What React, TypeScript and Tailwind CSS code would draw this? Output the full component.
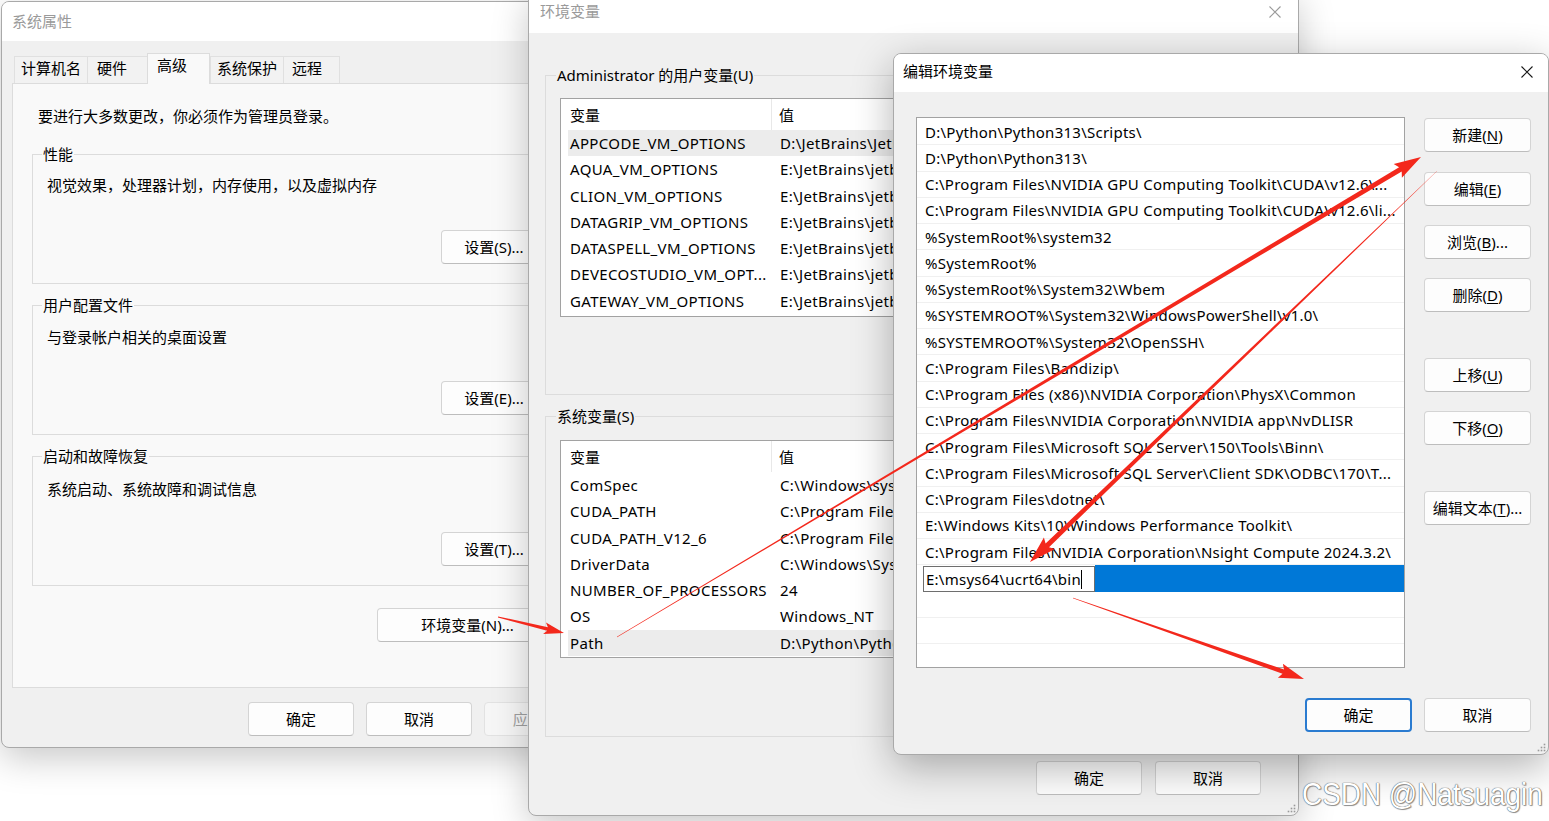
import React from "react";

function arrowPts(
  x1: number, y1: number, x2: number, y2: number,
  tail: number, shaft: number, hl: number, hw: number
): string {
  const dx = x2 - x1, dy = y2 - y1;
  const L = Math.hypot(dx, dy);
  const ux = dx / L, uy = dy / L;
  const nx = -uy, ny = ux;
  const bx = x2 - ux * hl, by = y2 - uy * hl;
  const nb = 3;
  const pts: [number, number][] = [
    [x1 + (nx * tail) / 2, y1 + (ny * tail) / 2],
    [bx + (nx * shaft) / 2, by + (ny * shaft) / 2],
    [bx - ux * nb + (nx * hw) / 2, by - uy * nb + (ny * hw) / 2],
    [x2, y2],
    [bx - ux * nb - (nx * hw) / 2, by - uy * nb - (ny * hw) / 2],
    [bx - (nx * shaft) / 2, by - (ny * shaft) / 2],
    [x1 - (nx * tail) / 2, y1 - (ny * tail) / 2],
  ];
  return pts.map((p) => `${p[0].toFixed(1)},${p[1].toFixed(1)}`).join(" ");
}

function CloseX({ color }: { color: string }) {
  return (
    <svg width="14" height="14" viewBox="0 0 14 14">
      <path d="M1.5 1.5L12.5 12.5M12.5 1.5L1.5 12.5" stroke={color} strokeWidth="1.1" fill="none" />
    </svg>
  );
}

function Grip() {
  return (
    <svg width="10" height="10" viewBox="0 0 10 10">
      {[
        [8.5, 2.5], [8.5, 5.5], [5.5, 5.5], [8.5, 8.5], [5.5, 8.5], [2.5, 8.5],
      ].map((p, i) => (
        <rect key={i} x={p[0] - 0.8} y={p[1] - 0.8} width="1.6" height="1.6" fill="#9a9a9a" />
      ))}
    </svg>
  );
}

function Btn({
  children,
  className = "",
  kind = "normal",
}: {
  children: React.ReactNode;
  className?: string;
  kind?: "normal" | "focus" | "disabled";
}) {
  const base =
    "h-[34px] rounded-[4px] flex items-center justify-center text-[15px] leading-[20px] shrink-0 whitespace-nowrap pb-[1px]";
  const k =
    kind === "focus"
      ? "bg-[#fdfdfd] border-2 border-[#2a7bd0]"
      : kind === "disabled"
      ? "bg-[#f6f6f6] border border-[#e2e2e2] text-[#a0a0a0]"
      : "bg-[#fdfdfd] border border-[#d4d4d4] border-b-[#bdbdbd]";
  return <div className={`${base} ${k} ${className}`}>{children}</div>;
}

function U({ c }: { c: string }) {
  return <span className="underline underline-offset-[2px]">{c}</span>;
}

const userVars: [string, string][] = [
  ["APPCODE_VM_OPTIONS", "D:\\JetBrains\\JetBrains\\vmoptions\\appcode.vmoptions"],
  ["AQUA_VM_OPTIONS", "E:\\JetBrains\\jetbra\\vmoptions\\aqua.vmoptions"],
  ["CLION_VM_OPTIONS", "E:\\JetBrains\\jetbra\\vmoptions\\clion.vmoptions"],
  ["DATAGRIP_VM_OPTIONS", "E:\\JetBrains\\jetbra\\vmoptions\\datagrip.vmoptions"],
  ["DATASPELL_VM_OPTIONS", "E:\\JetBrains\\jetbra\\vmoptions\\dataspell.vmoptions"],
  ["DEVECOSTUDIO_VM_OPT...", "E:\\JetBrains\\jetbra\\vmoptions\\devecostudio.vmoptions"],
  ["GATEWAY_VM_OPTIONS", "E:\\JetBrains\\jetbra\\vmoptions\\gateway.vmoptions"],
];

const sysVars: [string, string][] = [
  ["ComSpec", "C:\\Windows\\system32\\cmd.exe"],
  ["CUDA_PATH", "C:\\Program Files\\NVIDIA GPU Computing Toolkit\\CUDA\\v12.6"],
  ["CUDA_PATH_V12_6", "C:\\Program Files\\NVIDIA GPU Computing Toolkit\\CUDA\\v12.6"],
  ["DriverData", "C:\\Windows\\System32\\Drivers\\DriverData"],
  ["NUMBER_OF_PROCESSORS", "24"],
  ["OS", "Windows_NT"],
  ["Path", "D:\\Python\\Python313\\Scripts\\;D:\\Python\\Python313\\"],
];

const paths = [
  "D:\\Python\\Python313\\Scripts\\",
  "D:\\Python\\Python313\\",
  "C:\\Program Files\\NVIDIA GPU Computing Toolkit\\CUDA\\v12.6\\...",
  "C:\\Program Files\\NVIDIA GPU Computing Toolkit\\CUDA\\v12.6\\li...",
  "%SystemRoot%\\system32",
  "%SystemRoot%",
  "%SystemRoot%\\System32\\Wbem",
  "%SYSTEMROOT%\\System32\\WindowsPowerShell\\v1.0\\",
  "%SYSTEMROOT%\\System32\\OpenSSH\\",
  "C:\\Program Files\\Bandizip\\",
  "C:\\Program Files (x86)\\NVIDIA Corporation\\PhysX\\Common",
  "C:\\Program Files\\NVIDIA Corporation\\NVIDIA app\\NvDLISR",
  "C:\\Program Files\\Microsoft SQL Server\\150\\Tools\\Binn\\",
  "C:\\Program Files\\Microsoft SQL Server\\Client SDK\\ODBC\\170\\T...",
  "C:\\Program Files\\dotnet\\",
  "E:\\Windows Kits\\10\\Windows Performance Toolkit\\",
  "C:\\Program Files\\NVIDIA Corporation\\Nsight Compute 2024.3.2\\",
];

function GroupLegend({ children }: { children: React.ReactNode }) {
  return (
    <div className="-mt-[11px] ml-[9px] px-[1px] bg-[#f9f9f9] w-fit leading-[20px] text-[15px]">{children}</div>
  );
}

function SystemProps() {
  const tabs: { t: string; w: string; pl: string; sel?: boolean }[] = [
    { t: "计算机名", w: "w-[73px]", pl: "pl-[6px]" },
    { t: "硬件", w: "w-[60px]", pl: "pl-[9px]" },
    { t: "高级", w: "w-[63px]", pl: "pl-[9px]", sel: true },
    { t: "系统保护", w: "w-[73px]", pl: "pl-[6px]" },
    { t: "远程", w: "w-[57px]", pl: "pl-[8px]" },
  ];
  return (
    <div className="absolute left-[1px] top-[1px] w-[600px] h-[747px] rounded-[8px] border border-[#a9a9a9] bg-[#f0f0f0] shadow-[0_10px_36px_rgba(0,0,0,0.22)] flex flex-col overflow-hidden">
      <div className="h-[39px] shrink-0 bg-white flex items-center pl-[10px] pb-[1px] text-[15px] text-[#9a9a9a]">系统属性</div>
      <div className="flex-1 flex flex-col px-[10px] pt-[12px]">
        <div className="h-[30px] flex items-end pl-[2px] relative z-10">
          {tabs.map((tab) =>
            tab.sel ? (
              <div
                key={tab.t}
                className={`${tab.w} ${tab.pl} h-[31px] -mb-[1px] bg-[#f9f9f9] border-t border-l border-r border-[#dcdcdc] flex pt-[1px] leading-[20px] text-[15px]`}
              >
                {tab.t}
              </div>
            ) : (
              <div
                key={tab.t}
                className={`${tab.w} ${tab.pl} h-[27px] bg-[#f2f2f2] border-t border-l border-[#e0e0e0] last:border-r flex pt-[1px] leading-[20px] text-[15px]`}
              >
                {tab.t}
              </div>
            )
          )}
        </div>
        <div className="h-[605px] shrink-0 bg-[#f9f9f9] border border-[#dcdcdc] flex flex-col pt-[22px] text-[15px] leading-[20px]">
          <div className="pl-[25px]">要进行大多数更改，你必须作为管理员登录。</div>

          <div className="mt-[28px] ml-[19px] w-[537px] h-[130px] border border-[#dcdcdc] flex flex-col shrink-0">
            <GroupLegend>性能</GroupLegend>
            <div className="mt-[11px] pl-[14px]">视觉效果，处理器计划，内存使用，以及虚拟内存</div>
            <Btn className="w-[106px] mt-[35px] self-end mr-[21px]">设置(S)...</Btn>
          </div>

          <div className="mt-[21px] ml-[19px] w-[537px] h-[130px] border border-[#dcdcdc] flex flex-col shrink-0">
            <GroupLegend>用户配置文件</GroupLegend>
            <div className="mt-[12px] pl-[14px]">与登录帐户相关的桌面设置</div>
            <Btn className="w-[106px] mt-[34px] self-end mr-[21px]">设置(E)...</Btn>
          </div>

          <div className="mt-[21px] ml-[19px] w-[537px] h-[130px] border border-[#dcdcdc] flex flex-col shrink-0">
            <GroupLegend>启动和故障恢复</GroupLegend>
            <div className="mt-[13px] pl-[14px]">系统启动、系统故障和调试信息</div>
            <Btn className="w-[106px] mt-[33px] self-end mr-[21px]">设置(T)...</Btn>
          </div>

          <Btn className="w-[181px] mt-[22px] ml-[364px]">环境变量(N)...</Btn>
        </div>
        <div className="mt-[14px] flex justify-end gap-[12px]">
          <Btn className="w-[106px]">确定</Btn>
          <Btn className="w-[106px]">取消</Btn>
          <Btn className="w-[106px]" kind="disabled">应用(A)</Btn>
        </div>
      </div>
    </div>
  );
}

function VarList({ rows, hl, h }: { rows: [string, string][]; hl: number; h: string }) {
  return (
    <div className={`ml-[14px] w-[707px] ${h} shrink-0 border border-[#a2a2a2] bg-white flex flex-col overflow-hidden`}>
      <div className="h-[31px] shrink-0 flex items-center text-[15px]">
        <div className="w-[211px] h-full flex items-center pl-[9px] border-r border-[#e8e8e8]">变量</div>
        <div className="pl-[7px]">值</div>
      </div>
      {rows.map((r, i) => (
        <div
          key={r[0]}
          className={`h-[26.25px] shrink-0 ml-[7px] flex items-center text-[15px] tracking-[0.35px] whitespace-nowrap ${
            i === hl ? "bg-[#ececec]" : ""
          }`}
        >
          <div className="w-[204px] pl-[2px] overflow-hidden">{r[0]}</div>
          <div className="pl-[8px] overflow-hidden">{r[1]}</div>
        </div>
      ))}
    </div>
  );
}

function EnvVars() {
  return (
    <div className="absolute left-[528px] top-[-9px] w-[771px] h-[825px] rounded-[8px] border border-[#a9a9a9] bg-[#f0f0f0] shadow-[0_10px_36px_rgba(0,0,0,0.22)] flex flex-col overflow-hidden">
      <div className="h-[41px] shrink-0 bg-white flex items-center justify-between pl-[11px] pr-[16px] pb-[2px] text-[15px] text-[#9a9a9a]">
        <span>环境变量</span>
        <CloseX color="#9a9a9a" />
      </div>
      <div className="flex-1 flex flex-col pl-[16px] text-[15px] leading-[20px] relative">
        <div className="mt-[42px] w-[738px] h-[320px] shrink-0 border border-[#dcdcdc] flex flex-col">
          <div className="-mt-[11px] ml-[10px] px-[1px] bg-[#f0f0f0] w-fit">Administrator 的用户变量(U)</div>
          <div className="mt-[13px]">
            <VarList rows={userVars} hl={0} h="h-[219px]" />
          </div>
        </div>
        <div className="mt-[21px] w-[738px] h-[321px] shrink-0 border border-[#dcdcdc] flex flex-col">
          <div className="-mt-[11px] ml-[10px] px-[1px] bg-[#f0f0f0] w-fit">系统变量(S)</div>
          <div className="mt-[14px]">
            <VarList rows={sysVars} hl={6} h="h-[218px]" />
          </div>
        </div>
        <div className="mt-[24px] flex justify-end gap-[13px] pr-[37px]">
          <Btn className="w-[106px]">确定</Btn>
          <Btn className="w-[106px]">取消</Btn>
        </div>
        <div className="absolute right-[2px] bottom-[2px]">
          <Grip />
        </div>
      </div>
    </div>
  );
}

function EditEnv() {
  return (
    <div className="absolute left-[893px] top-[53px] w-[656px] h-[702px] rounded-[8px] border border-[#a9a9a9] bg-[#f0f0f0] shadow-[0_12px_40px_rgba(0,0,0,0.3)] flex flex-col overflow-hidden">
      <div className="h-[38px] shrink-0 bg-white flex items-center justify-between pl-[9px] pr-[14px] pb-[3px] text-[15px] text-black">
        <span>编辑环境变量</span>
        <CloseX color="#1a1a1a" />
      </div>
      <div className="flex-1 flex flex-col pl-[22px] pr-[17px] pt-[25px] text-[15px] leading-[20px] relative">
        <div className="flex">
          <div className="w-[489px] h-[551px] shrink-0 border border-[#a2a2a2] bg-white pt-[1px] flex flex-col overflow-hidden">
            {paths.map((p) => (
              <div
                key={p}
                className="h-[26.25px] shrink-0 border-b border-[#f0f0f0] flex items-center pl-[8px] tracking-[0.25px] whitespace-nowrap overflow-hidden"
              >
                {p}
              </div>
            ))}
            <div className="h-[26.25px] shrink-0 flex">
              <div className="w-[6px] bg-white" />
              <div className="w-[172px] h-[26px] mt-[1px] border border-[#6e6e6e] bg-white flex items-center pl-[2px] tracking-[0.25px] whitespace-nowrap">
                <span>E:\msys64\ucrt64\bin</span>
                <span className="w-[1px] h-[19px] bg-black" />
              </div>
              <div className="flex-1 bg-[#0078d7]" />
            </div>
            {[0, 1, 2].map((i) => (
              <div key={i} className="h-[26.25px] shrink-0 border-b border-[#f0f0f0]" />
            ))}
          </div>
          <div className="ml-[19px] flex flex-col">
            <Btn className="w-[107px] mt-[1px]">新建(<U c="N" />)</Btn>
            <Btn className="w-[107px] mt-[20px]">编辑(<U c="E" />)</Btn>
            <Btn className="w-[107px] mt-[19px]">浏览(<U c="B" />)...</Btn>
            <Btn className="w-[107px] mt-[19px]">删除(<U c="D" />)</Btn>
            <Btn className="w-[107px] mt-[46px]">上移(<U c="U" />)</Btn>
            <Btn className="w-[107px] mt-[19px]">下移(<U c="O" />)</Btn>
            <Btn className="w-[107px] mt-[46px]">编辑文本(<U c="T" />)...</Btn>
          </div>
        </div>
        <div className="mt-[30px] flex justify-end gap-[12px]">
          <Btn className="w-[107px]" kind="focus">确定</Btn>
          <Btn className="w-[107px]">取消</Btn>
        </div>
        <div className="absolute right-[2px] bottom-[2px]">
          <Grip />
        </div>
      </div>
    </div>
  );
}

export default function App() {
  const red = "#f3281c";
  return (
    <div className="relative w-[1549px] h-[821px] overflow-hidden bg-white text-black font-['Noto_Sans','Noto_Sans_CJK_SC',sans-serif]">
      <SystemProps />
      <EnvVars />
      <EditEnv />
      <svg className="absolute inset-0 pointer-events-none" width="1549" height="821" viewBox="0 0 1549 821">
        <polygon points={arrowPts(498, 617, 564, 633, 1.2, 3.6, 17, 12)} fill={red} />
        <polygon points={arrowPts(617, 637, 1421, 157, 0.4, 5, 24, 16)} fill={red} />
        <polygon points={arrowPts(1437, 171, 1030, 562, 0.4, 5, 24, 16)} fill={red} />
        <polygon points={arrowPts(1073, 598, 1304, 679, 0.4, 4.5, 22, 15)} fill={red} />
      </svg>
      <div className="absolute left-[1302px] top-[779px] text-[31px] leading-none whitespace-nowrap origin-left scale-x-[0.9] text-white font-['Liberation_Sans',sans-serif] [text-shadow:0_0_1px_#555,0_0_1px_#555,1px_1px_1px_#9a9a9a]">
        CSDN @Natsuagin
      </div>
    </div>
  );
}
